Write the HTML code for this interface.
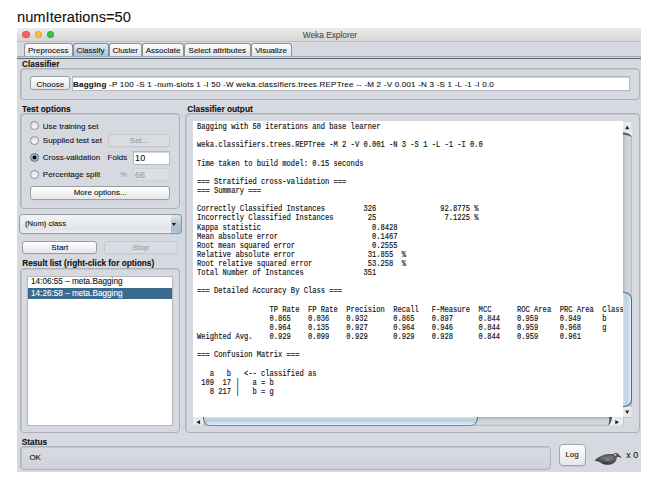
<!DOCTYPE html>
<html><head><meta charset="utf-8">
<style>
*{box-sizing:border-box;margin:0;padding:0}
html,body{width:655px;height:486px;overflow:hidden;background:#fff;position:relative}
body{font-family:"Liberation Sans",sans-serif;font-size:8px;color:#111;-webkit-text-stroke:0.1px currentColor}
.a{position:absolute}
#cap{left:17px;top:9px;font-size:14.7px;color:#111;white-space:pre;line-height:17px}
#win{left:17px;top:28px;width:624px;height:444px;background:#d6d9e0}
#tb{left:17px;top:28px;width:624px;height:13.6px;background:linear-gradient(#ececec,#d5d5d5);border-bottom:1.2px solid #bdbdbd}
.dot{width:7.6px;height:7.6px;border-radius:50%;top:30.9px;border:0.6px solid rgba(0,0,0,0.12)}
#ttl{left:302.8px;top:31.3px;color:#4a4a4a;font-size:8.3px;line-height:8px;white-space:pre}
.tab{top:43px;height:14px;border:1px solid #8e939b;border-bottom:none;border-radius:3px 3px 0 0;background:linear-gradient(#fbfbfb,#e2e3e6);text-align:center;line-height:13.6px;font-size:8px;color:#111;white-space:pre}
.tab.sel{background:linear-gradient(#e4ecf4,#bed2e4 60%,#a9c2da);height:13.3px;border-color:#7f8a97}
#bl{left:17px;top:55.8px;width:624px;height:3.4px;background:linear-gradient(#8e9eb0 0,#a3b5c8 1px,#bcd5ea 1.2px,#bcd5ea 2.2px,#5e6672 2.5px,#5e6672 3.4px)}
.lbl{font-weight:bold;font-size:8.3px;white-space:pre;line-height:8px}
.t{white-space:pre;line-height:8px;font-size:8px}
.box{border:1px solid #aeb1b8;border-radius:4px;box-shadow:inset 1px 1px 0 #c3c6cc}
.btn{border:1px solid #9a9da3;border-radius:3px;background:linear-gradient(#fefefe,#e6e7ea);box-shadow:0 0.5px 0 rgba(0,0,0,0.06);text-align:center;font-size:8px;color:#111;white-space:pre}
.btn.dis{border-color:#c6c8cd;background:#d9dce2;color:#9a9ca1}
.fld{background:#fff;border:1px solid #a6a9ae}
.radio{width:9px;height:9px;border-radius:50%;border:1px solid #8d9096;background:linear-gradient(#dcdee2,#eef0f2 60%,#f6f7f8)}
#out{left:196.9px;top:122.2px;font-family:"Liberation Mono",monospace;font-size:8.3px;line-height:9.13px;transform:scaleX(0.857);transform-origin:0 0;white-space:pre;color:#111;-webkit-text-stroke:0.15px #111}
</style></head><body>
<div id="cap" class="a">numIterations=50</div>
<div id="win" class="a"></div>
<div id="tb" class="a"></div>
<div class="a dot" style="left:22.25px;background:#fc605c"></div>
<div class="a dot" style="left:34.55px;background:#fdbc40"></div>
<div class="a dot" style="left:46.75px;background:#34c84a"></div>
<div id="ttl" class="a">Weka Explorer</div>

<div class="a tab" style="left:24px;width:48.5px">Preprocess</div>
<div class="a tab sel" style="left:72.5px;width:36px">Classify</div>
<div class="a tab" style="left:108.5px;width:33.5px">Cluster</div>
<div class="a tab" style="left:142px;width:42px">Associate</div>
<div class="a tab" style="left:184px;width:66.5px">Select attributes</div>
<div class="a tab" style="left:250.5px;width:41.2px">Visualize</div>
<div id="bl" class="a"></div>

<div class="a lbl" style="left:22px;top:60px">Classifier</div>
<div class="a box" style="left:19.6px;top:68.1px;width:620.7px;height:31.8px"></div>
<div class="a btn" style="left:30.3px;top:76.4px;width:40px;height:14.1px;line-height:15.6px">Choose</div>
<div class="a fld" style="left:71.9px;top:75.5px;width:558.3px;height:15.3px;border-color:#b4b7bc;box-shadow:inset 0 1px 0 #d0d2d6"></div>
<div class="a t" style="left:73px;top:80.6px;letter-spacing:0.225px"><b>Bagging</b> -P 100 -S 1 -num-slots 1 -I 50 -W weka.classifiers.trees.REPTree -- -M 2 -V 0.001 -N 3 -S 1 -L -1 -I 0.0</div>

<div class="a lbl" style="left:22px;top:104.8px">Test options</div>
<div class="a box" style="left:19.7px;top:113px;width:160px;height:95.5px"></div>
<div class="a radio" style="left:30px;top:121.4px"></div>
<div class="a radio" style="left:30px;top:135.7px"></div>
<div class="a radio" style="left:30px;top:153.2px;border-color:#5a6d82;background:radial-gradient(circle at 50% 50%,#0a0a0a 0,#0a0a0a 1.5px,#7d9cba 2.1px,#a6c2dc 3.2px,#8aa8c5 4.5px)"></div>
<div class="a radio" style="left:30px;top:170.1px"></div>
<div class="a t" style="left:42.8px;top:122.6px">Use training set</div>
<div class="a t" style="left:42.8px;top:136.9px">Supplied test set</div>
<div class="a t" style="left:42.8px;top:154.3px">Cross-validation</div>
<div class="a t" style="left:42.8px;top:171.1px">Percentage split</div>
<div class="a btn dis" style="left:108.3px;top:133.9px;width:61.7px;height:13.3px;line-height:11px">Set...</div>
<div class="a t" style="left:107.6px;top:153.8px">Folds</div>
<div class="a fld" style="left:132.9px;top:151.2px;width:37.1px;height:13.4px;border-color:#b4b7bc;box-shadow:inset 0 1px 0 #d4d6da"></div>
<div class="a t" style="left:134.9px;top:154.2px;font-size:9px;letter-spacing:0.3px">10</div>
<div class="a t" style="left:120.2px;top:171.2px;color:#9a9ca1;font-size:7.3px">%</div>
<div class="a" style="left:133px;top:168px;width:37px;height:13px;background:#dcdfe5;border:1px solid #ced1d6"></div>
<div class="a t" style="left:134.9px;top:171px;color:#9a9ca1;font-size:9px;letter-spacing:0.2px">66</div>
<div class="a btn" style="left:30.3px;top:186px;width:139.7px;height:13.6px;line-height:12.5px">More options...</div>

<div class="a btn" style="left:19px;top:214.4px;width:162.8px;height:19.8px;text-align:left;padding-left:5px;line-height:17.5px;border-radius:4px;font-size:7.7px;background:linear-gradient(#f3f4f6,#e2e4e8 80%,#eceef1)">(Nom) class</div>
<div class="a" style="left:171px;top:214.4px;width:10.8px;height:19.8px;border:1px solid #8d98a6;border-left:none;border-radius:0 4px 4px 0;background:linear-gradient(#dfe8f0,#b5c7d9 45%,#aabdd1 85%,#bccbdb)"></div>
<svg class="a" style="left:171px;top:222px" width="6" height="5"><path d="M0.9,1 L4.9,1 L2.9,4 Z" fill="#111"/></svg>
<div class="a btn" style="left:22.2px;top:240.5px;width:75.2px;height:13.2px;line-height:11px">Start</div>
<div class="a btn dis" style="left:103.7px;top:241px;width:74.3px;height:12.5px;line-height:11px">Stop</div>

<div class="a lbl" style="left:22.2px;top:259.4px;letter-spacing:-0.02px">Result list (right-click for options)</div>
<div class="a box" style="left:20px;top:268.2px;width:159.6px;height:164.8px"></div>
<div class="a fld" style="left:26.9px;top:276px;width:145.9px;height:150px;border-color:#b3b6bb"></div>
<div class="a" style="left:27.9px;top:288.2px;width:144.6px;height:10.5px;background:#3a6a8e"></div>
<div class="a t" style="left:31px;top:278px;font-size:8.2px">14:06:55 – meta.Bagging</div>
<div class="a t" style="left:31px;top:289.5px;color:#fff;font-size:8.2px">14:26:58 – meta.Bagging</div>

<div class="a lbl" style="left:187.3px;top:104.8px">Classifier output</div>
<div class="a box" style="left:185.4px;top:112.6px;width:455.1px;height:320.6px"></div>
<div class="a" style="left:193.2px;top:121.4px;width:429.6px;height:295.6px;background:#fff"></div>
<div id="out" class="a">Bagging with 50 iterations and base learner

weka.classifiers.trees.REPTree -M 2 -V 0.001 -N 3 -S 1 -L -1 -I 0.0

Time taken to build model: 0.15 seconds

=== Stratified cross-validation ===
=== Summary ===

Correctly Classified Instances         326               92.8775 %
Incorrectly Classified Instances        25                7.1225 %
Kappa statistic                          0.8428
Mean absolute error                      0.1467
Root mean squared error                  0.2555
Relative absolute error                 31.855  %
Root relative squared error             53.258  %
Total Number of Instances              351     

=== Detailed Accuracy By Class ===

                 TP Rate  FP Rate  Precision  Recall   F-Measure  MCC      ROC Area  PRC Area  Class
                 0.865    0.036    0.932      0.865    0.897      0.844    0.959     0.949     b
                 0.964    0.135    0.927      0.964    0.946      0.844    0.959     0.968     g
Weighted Avg.    0.929    0.099    0.929      0.929    0.928      0.844    0.959     0.961     

=== Confusion Matrix ===

   a   b   &lt;-- classified as
 109  17 |   a = b
   8 217 |   b = g
</div>
<!-- vertical scrollbar -->
<div class="a" style="left:622.8px;top:121.5px;width:9.4px;height:295.5px;background:linear-gradient(90deg,#b4b7bd,#cdd0d5 35%,#d3d5da 70%,#c9ccd1 90%,#a8abb1)"></div>
<div class="a" style="left:622.8px;top:121.5px;width:9.4px;height:11px;background:linear-gradient(90deg,#e4e6e9,#f0f1f3 60%,#dcdee2)"></div>
<svg class="a" style="left:622.8px;top:132px" width="10" height="7"><defs><linearGradient id="vc" x1="0" y1="0" x2="0" y2="1"><stop offset="0" stop-color="#6a6d72"/><stop offset="0.5" stop-color="#3a3c40"/><stop offset="1" stop-color="#c8cbd0"/></linearGradient></defs><path d="M0,0 L9.4,0 L9.4,6 C6.5,3.6 3.5,2.6 0,2.6 Z" fill="#eceef0"/><path d="M0,0 C3.5,0.2 6.8,1.8 9.4,4.8 L9.4,6 C6.5,3.8 3.5,2.8 0,2.8 Z" fill="url(#vc)" opacity="0.85"/></svg>
<div class="a" style="left:622.8px;top:292.4px;width:9px;height:114.2px;border:1px solid #53667c;border-left:none;border-radius:0 8px 8px 0/0 7px 7px 0;background:linear-gradient(90deg,#d8e6f2,#bed2e5 30%,#cadcec 70%,#e6f2fb)"></div>
<div class="a" style="left:622.8px;top:406.6px;width:9.4px;height:10.4px;background:linear-gradient(90deg,#e4e6e9,#f0f1f3 60%,#dcdee2)"></div>
<!-- horizontal scrollbar -->
<div class="a" style="left:193.2px;top:417px;width:429.6px;height:8.8px;background:linear-gradient(#a9acb2,#cdd0d5 30%,#d5d7db 75%,#b5b8bd)"></div>
<div class="a" style="left:193.2px;top:417px;width:9.8px;height:8.8px;background:linear-gradient(#e4e6e9,#f0f1f3 60%,#dcdee2)"></div>
<div class="a" style="left:203px;top:417px;width:275px;height:8.8px;border:1px solid #53667c;border-top:none;border-color:#56697e #56697e #74889b;border-radius:0 0 7px 7px/0 0 8px 8px;background:linear-gradient(#d3e2ef,#b6cadd 35%,#c8dbeb 70%,#e8f4fc)"></div>
<div class="a" style="left:612px;top:417px;width:10.8px;height:8.8px;background:linear-gradient(#e4e6e9,#f0f1f3 60%,#dcdee2)"></div>
<svg class="a" style="left:606px;top:417px" width="7" height="9"><defs><linearGradient id="hc" x1="0" x2="1"><stop offset="0" stop-color="#c8cbd0"/><stop offset="0.6" stop-color="#2e3035"/><stop offset="1" stop-color="#6a6d72"/></linearGradient></defs><path d="M0,0 L6.2,0 C5.6,3.5 4.2,6.8 1.8,8.8 L6.2,8.8 L6.2,0 Z" fill="#eceef0"/><path d="M3,0 L6.2,0 C5.8,3.5 4.6,6.6 2.2,8.8 L1,8.8 C3,6.5 3.8,3.5 3,0 Z" fill="url(#hc)" opacity="0.9"/></svg>
<div class="a" style="left:622.8px;top:417px;width:9.4px;height:8.8px;background:#d9dbdf;border-left:1px solid #c3c6cb;border-top:1px solid #c3c6cb"></div>
<svg class="a" style="left:624.8px;top:124.5px" width="6" height="5"><path d="M2.2,0.5 L4.3,4.3 L0.2,4.3 Z" fill="#222"/></svg>
<svg class="a" style="left:624.8px;top:409.5px" width="6" height="5"><path d="M0.2,0.5 L4.3,0.5 L2.2,4.3 Z" fill="#222"/></svg>
<svg class="a" style="left:196.3px;top:419.5px" width="5" height="6"><path d="M0.3,2.2 L4.1,0.1 L4.1,4.3 Z" fill="#222"/></svg>
<svg class="a" style="left:614.6px;top:419.5px" width="5" height="6"><path d="M4.1,2.2 L0.3,0.1 L0.3,4.3 Z" fill="#222"/></svg>
<div class="a lbl" style="left:21.8px;top:437.6px">Status</div>
<div class="a box" style="left:19.7px;top:445.8px;width:531.7px;height:23.8px;background:linear-gradient(#d8dbe1,#d3d6dc 60%,#cdd0d5)"></div>
<div class="a t" style="left:29.4px;top:453.5px">OK</div>
<div class="a btn" style="left:558.5px;top:443.8px;width:27.2px;height:22.7px;line-height:20.5px;border-radius:4px;border-color:#a3a6ab;background:linear-gradient(#fdfdfd,#e6e7ea);box-shadow:0 1px 0 rgba(0,0,0,0.08)">Log</div>
<svg class="a" style="left:593px;top:451px" width="30" height="15" viewBox="0 0 30 15">
<defs><radialGradient id="bg" cx="0.5" cy="0.45" r="0.6"><stop offset="0" stop-color="#7a7a7a"/><stop offset="0.7" stop-color="#4a4a4a"/><stop offset="1" stop-color="#303030"/></radialGradient></defs>
<path d="M1.7,9.5 C3,8.3 4.5,6.8 6,6 C8.5,4.5 11,3.6 14,3.3 C16.5,3.1 18.5,3.2 20.3,3.1 C21,2.2 22,1.8 23,1.9 C24.2,2 25,2.6 25.6,3.4 C26.8,4.6 28,5.7 28.9,6.9 C27.4,6.3 25.5,5.9 24,5.7 C23.6,7 23.6,8.4 23.1,9.6 C22.6,10.8 21.8,11.6 20.6,12.2 C18.3,13.4 15.8,13.8 13.2,13.7 C10.8,13.6 8.8,12.9 7.4,11.6 C6.4,10.9 5.3,10.5 4.2,10.3 C3.2,10.1 2.3,9.9 1.7,9.5 Z" fill="url(#bg)"/>
<ellipse cx="22.3" cy="3.8" rx="1.3" ry="1.1" fill="#d8d8d8" opacity="0.8"/>
<ellipse cx="14" cy="8.6" rx="2.2" ry="1.2" fill="#9a9a9a" opacity="0.6"/>
<ellipse cx="9.5" cy="7.2" rx="1.8" ry="0.9" fill="#8a8a8a" opacity="0.5"/>
<ellipse cx="18.5" cy="6" rx="1.6" ry="0.9" fill="#8f8f8f" opacity="0.5"/>
<ellipse cx="12" cy="11.8" rx="3" ry="1" fill="#2a2a2a" opacity="0.5"/>
</svg>
<div class="a t" style="left:626.3px;top:451.2px;font-size:8.8px;line-height:9px">x 0</div>
</body></html>
